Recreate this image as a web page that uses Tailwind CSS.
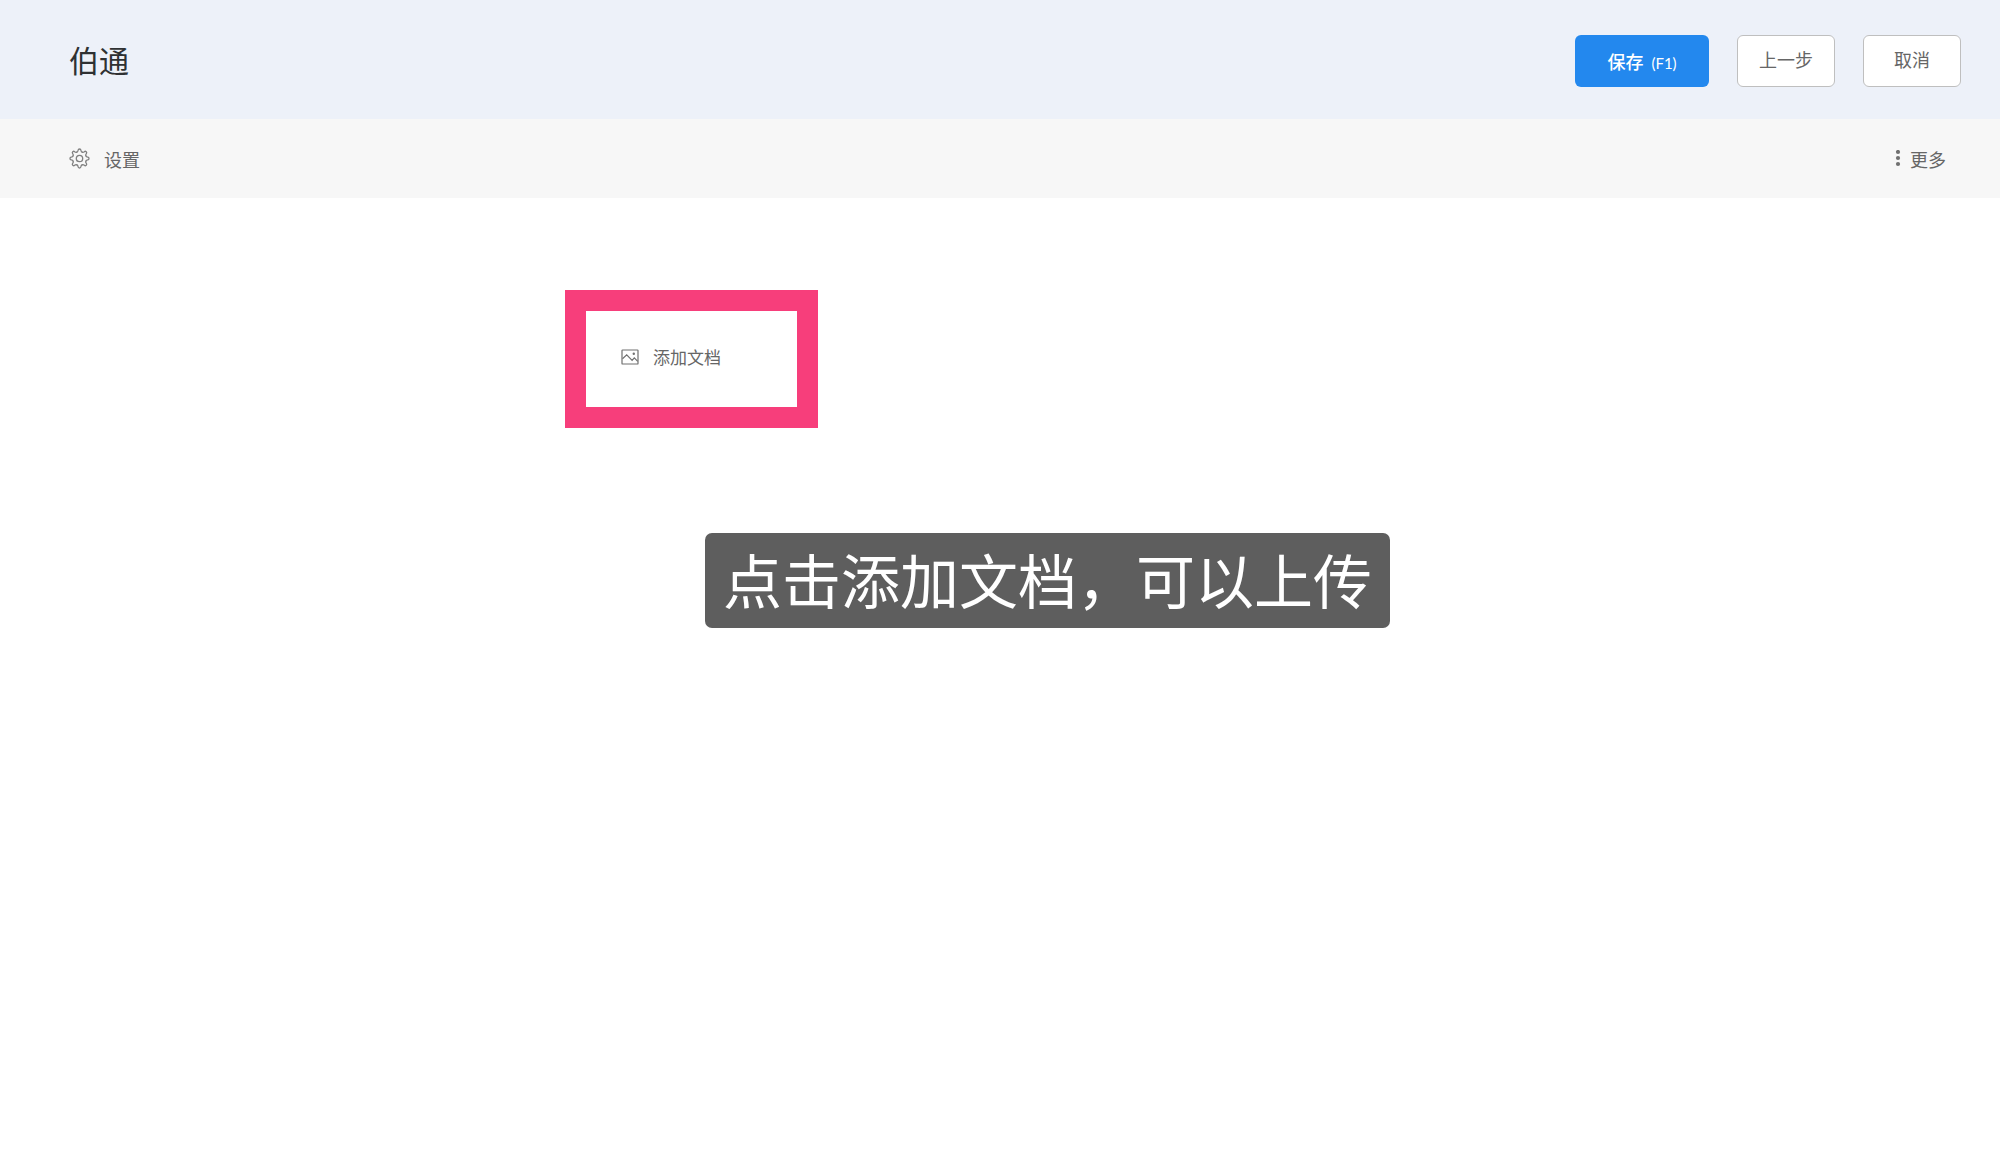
<!DOCTYPE html>
<html lang="zh-CN">
<head>
  <meta charset="UTF-8">
  <meta name="viewport" content="width=device-width, initial-scale=1">
  <title>伯通</title>
  <script src="https://cdn.jsdelivr.net/npm/@tailwindcss/browser@4"></script>
</head>
<body class="bg-white min-h-screen font-['Noto_Sans_CJK_SC',sans-serif] text-[#666]">

  <!-- 顶部栏 -->
  <header class="flex items-start justify-between h-[119px] pt-[35px] pl-[69px] pr-[39px] bg-[#edf1f9]">
    <h1 class="text-[30px] leading-[48px] text-[#2f3133]">伯通</h1>
    <div class="flex gap-7">
      <button type="button" class="flex items-baseline justify-center gap-2 w-[134px] h-[52px] rounded-md bg-[#2388ee] text-white text-lg leading-[52px] font-medium">保存 <span class="font-['Lato',sans-serif] text-[15px] font-normal">(F1)</span></button>
      <button type="button" class="w-[98px] h-[52px] pb-1 rounded-md border border-[#bfbfbf] bg-white text-lg">上一步</button>
      <button type="button" class="w-[98px] h-[52px] pb-1 rounded-md border border-[#bfbfbf] bg-white text-lg">取消</button>
    </div>
  </header>

  <!-- 工具栏 -->
  <nav class="flex items-center justify-between h-[79px] pl-[69px] pr-[54px] bg-[#f7f7f7]">
    <button type="button" class="flex items-center gap-[14px] text-lg">
      <svg class="size-[21px]" viewBox="0 0 21 21" fill="none" stroke="#808080" stroke-width="1.3" stroke-linecap="round">
        <defs>
          <path id="tooth" d="M7.9 4.1C8.8 3.8 9 3.2 9.1 2.2Q9.2 1 10.5 1Q11.8 1 11.9 2.2C12 3.2 12.2 3.8 13.1 4.1"/>
        </defs>
        <use href="#tooth"/>
        <use href="#tooth" transform="rotate(45 10.5 10.5)"/>
        <use href="#tooth" transform="rotate(90 10.5 10.5)"/>
        <use href="#tooth" transform="rotate(135 10.5 10.5)"/>
        <use href="#tooth" transform="rotate(180 10.5 10.5)"/>
        <use href="#tooth" transform="rotate(225 10.5 10.5)"/>
        <use href="#tooth" transform="rotate(270 10.5 10.5)"/>
        <use href="#tooth" transform="rotate(315 10.5 10.5)"/>
        <circle cx="10.5" cy="10.5" r="3.2"/>
      </svg>
      设置
    </button>
    <button type="button" class="flex items-center gap-[9px] text-lg">
      <svg class="w-[6px] h-[18px]" viewBox="0 0 6 18" fill="#707070">
        <circle cx="3" cy="2" r="2.1"/>
        <circle cx="3" cy="8" r="2.1"/>
        <circle cx="3" cy="14" r="2.1"/>
      </svg>
      更多
    </button>
  </nav>

  <main class="flex flex-col items-start pt-[92px]">
    <!-- 添加文档 -->
    <div class="ml-[28.25%] w-[253px] h-[138px] border-[21px] border-[#f73e7b] pt-8 pl-[35px]">
      <button type="button" class="flex items-center gap-[14px] text-[17px] leading-7">
        <svg class="w-[18px] h-[16px]" viewBox="0 0 18 16" fill="none" stroke="#707070" stroke-width="1.2">
          <rect x="1" y="1" width="16" height="14" rx=".6"/>
          <path d="m1.5 9.8 4.2-3.9 5.4 5.4 2.2-2.4 3.4 3.4"/>
          <circle cx="12.8" cy="4.8" r="1.2" fill="#707070" stroke="none"/>
        </svg>
        添加文档
      </button>
    </div>

    <!-- 操作提示 -->
    <p class="ml-[35.25%] mt-[105px] px-[18px] h-[95px] rounded-[7px] bg-[#5e5e5e] text-white text-[59px] leading-[91px] whitespace-nowrap">点击添加文档，可以上传</p>
  </main>

</body>
</html>
